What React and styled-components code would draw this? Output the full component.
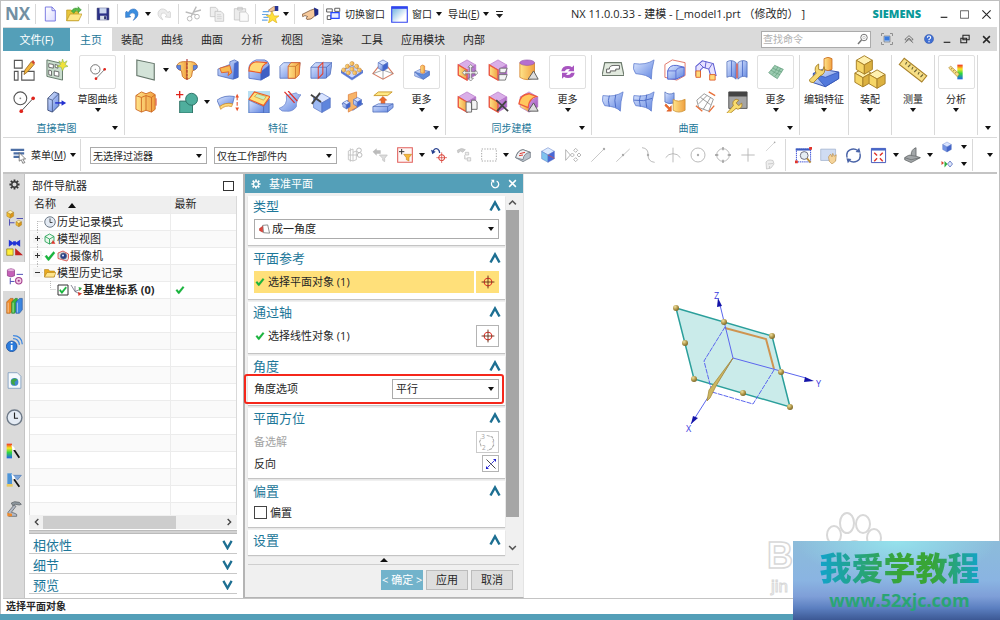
import React from 'react';
import styled, { createGlobalStyle } from 'styled-components';

const teal = '#549fb8';
const link = '#1d7799';
const ink = '#262626';
const rule = '#d9d9d9';

const GlobalStyle = createGlobalStyle`
  * {
    box-sizing: border-box;
  }
  body {
    margin: 0;
    background: #fff;
    color: ${ink};
    font-family: 'Open Sans', 'Noto Sans CJK SC', sans-serif;
    font-size: 10px;
    line-height: 16px;
  }
  button, input, select {
    font: inherit;
    color: inherit;
    margin: 0;
    padding: 0;
    border: 0;
    background: none;
    border-radius: 0;
  }
  svg {
    display: block;
    flex: none;
  }
`;

/* ---------- drawings ---------- */

const P = ({ d, f = 'none', s = '#444', w = 1, ...rest }) => (
  <path d={d} fill={f} stroke={s} strokeWidth={w} {...rest} />
);

const Cube = ({ x = 12, y = 12, r = 11, top = '#d9e4ff', left = 'url(#blue)', right = '#3f63cf', s = '#5570c0' }) => {
  const k = r * 0.87;
  const h = r / 2;
  return (
    <g stroke={s} strokeWidth="0.7" strokeLinejoin="round">
      <path fill={top} d={`M${x} ${y - r}l${k} ${h}l${-k} ${h}l${-k} ${-h}z`} />
      <path fill={left} d={`M${x - k} ${y - h}l${k} ${h}v${r}l${-k} ${-h}z`} />
      <path fill={right} d={`M${x + k} ${y - h}l${-k} ${h}v${r}l${k} ${-h}z`} />
    </g>
  );
};

const YellowCube = (props) => <Cube top="#fff1b0" left="#f6d666" right="#dcb140" s="#a9822a" {...props} />;

const SyncCube = () => (
  <g>
    <Cube top="#d9aee8" left="url(#gold)" right="url(#purple)" s="#b06cc4" />
    <P d="M2.5 6.5v11L12 23V12z" s="#ee5a3c" w={1.4} />
  </g>
);

const Ball = ({ x, y }) => <circle cx={x} cy={y} r="2.3" fill="url(#gold)" stroke="#b97c28" strokeWidth="0.5" />;

const Sheet = ({ lines }) => (
  <g>
    <P d="M1 5Q14 7 23 1Q20 12 20 22Q16 17 3 16Q-1 11 1 5z" f="url(#blue)" s="#5a78cc" w={0.8} />
    {lines}
  </g>
);

const Wrench = () => (
  <P
    d="M5 23L12 15Q10 10 15 8L18 9L15 12L18 15L21 12Q23 17 17 19L15 18L9 23Q6 25 5 23z"
    f="#f8dc70"
    s="#a5791c"
    w={0.8}
  />
);

const Tick = () => <P d="M2 13L5 10L9 15L19 3L22 6L10 21H8z" f="#17b73c" s="#119a30" w={0.6} />;

const art = {
  newFile: <P d="M5 1.5H15L20 7V22.500H5zM15 1.5V7H20" f="url(#paper)" s="#7474e0" w={1.4} />,
  open: (
    <g>
      <P d="M1 6H8L10 8H19V22H1z" f="#e8c63c" s="#b99318" />
      <P d="M1 22L6 12H24L19 22z" f="#ffe88b" s="#b99318" />
      <P d="M8 8Q12 1 18 4V1L23 6L18 10V7Q13 6 12 11z" f="#57b848" s="#2d8a28" w={0.7} />
    </g>
  ),
  save: (
    <g>
      <P d="M2 2H22V22H2z" f="#2b3187" s="#20265f" />
      <path d="M6 2H18V11H6z" fill="#cbd6ee" />
      <path d="M7 15H18V22H7z" fill="#d9dfea" />
      <path d="M14 16H17V21H14z" fill="#20265f" />
    </g>
  ),
  undo: (
    <P d="M1 9V18L10 17L7 14Q12 8 16 11Q20 15 14 23Q24 17 22 9Q18 0 9 5L5 10L3 7z" f="#3b8ee0" s="#2560b0" w={0.8} />
  ),
  redo: (
    <P d="M23 9V18L14 17L17 14Q12 8 8 11Q4 15 10 22Q0 17 2 9Q6 0 15 5L19 10L21 7z" f="#ececec" s="#c4c4c4" />
  ),
  cut: (
    <g>
      <P d="M17 1L9 16M1 9L16 13M13 9L24 6" s="#bbb" w={2} />
      <circle cx="7" cy="19" r="3.5" fill="none" stroke="#bbb" strokeWidth="1.5" />
      <circle cx="18" cy="16" r="3.5" fill="none" stroke="#bbb" strokeWidth="1.5" />
    </g>
  ),
  copy: (
    <g>
      <P d="M2 2H10L13 5V16H2z" f="#eee" s="#bbb" />
      <P d="M9 8H18L22 12V23H9z" f="#eee" s="#bbb" />
      <P d="M12 13H18M12 16H19M12 19H19" s="#ccc" />
    </g>
  ),
  paste: (
    <g>
      <P d="M2 4H19V21H2zM7 2H14V6H7z" f="#ececec" s="#bdbdbd" />
      <P d="M10 9H19L23 13V23H10z" f="#fafafa" s="#bbb" />
    </g>
  ),
  star: (
    <g>
      <P d="M1 8H10M0 12H9M2 16H9M0 20H8" s="#6aa8e8" w={1.6} />
      <P d="M14 7L17 14L24 14L19 18L21 24L15 20L9 24L11 17L6 13H12z" f="#ffe03c" s="#d8a810" w={0.8} />
      <P d="M9 6L16 1H20V6L12 8z" f="#f3c699" s="#8d6137" w={0.8} />
      <path d="M18 0H23V7H18z" fill="#283593" />
    </g>
  ),
  pointer: (
    <g>
      <P d="M0 12Q8 8 12 6L18 4V14Q13 20 7 19Q4 17 8 15Q4 12 1 15z" f="#f6c99b" s="#6b4528" />
      <path d="M17 2L23 5V12L18 15z" fill="#1e2a88" />
    </g>
  ),
  switchWin: (
    <g>
      <P d="M1 3H10V8H1z" f="#fff" s="#555" w={1.5} />
      <P d="M14 2H22V7H14z" f="#fff" s="#555" w={1.5} />
      <P d="M2 14H8V20H2z" f="#fff" s="#555" w={1.5} />
      <P d="M8 9H21V18H8z" f="#e6ecff" s="#2345ff" w={2} />
    </g>
  ),
  window: (
    <g>
      <P d="M1 1H23V23H1z" f="url(#pane)" s="#3346f0" w={1.6} />
      <path d="M1 1H23V4H1z" fill="#2f45ee" />
    </g>
  ),
  sketchEdit: (
    <g>
      <P d="M1.500 1.500H10V10H1.500zM1.500 13.500H5.500V23H1.500zM9.500 13.500H23V23H9.500z" f="#fff" s="#555" w={1.2} />
      <P d="M12 17L13 12L20 3L23 6L16 14z" f="#f3b53b" s="#8a5a19" w={0.8} />
      <path d="M20 3L23 6L24 4L22 1z" fill="#d0432c" />
    </g>
  ),
  sketchNew: (
    <g>
      <P d="M1 1L18 5V23L1 19z" f="#c9dccd" s="#5d7464" />
      <P d="M3 5L8 6V10L3 9zM3 12L6 13V18L3 17zM9 13L14 14V19L9 18zM10 6L13 7V10L10 9z" f="#fff" s="#444" w={0.8} />
      <path d="M18 0L19.500 4L23 2L21 6L24 8L20 9L18 13L16.500 9L12 8L16 6L14 2L17 4z" fill="#f2e23a" stroke="#7fb04c" strokeWidth="0.6" />
    </g>
  ),
  curve: (
    <g>
      <circle cx="8" cy="8" r="7" fill="#fff" stroke="#555" strokeWidth="1.2" />
      <circle cx="8" cy="8" r="1" fill="#888" />
      <P d="M9 22L22 8" s="#444" />
      <circle cx="9" cy="22" r="2" fill="#e0241c" />
      <circle cx="22" cy="8" r="2" fill="#e0241c" />
    </g>
  ),
  pad: (
    <g>
      <P d="M2 8L9 1L14 3V16L7 23L2 21z" f="url(#blue)" s="#3a4b78" />
      <P d="M2 8L7 10V23M7 10L14 3" s="#3a4b78" w={0.8} />
      <P d="M10 13H18" s="#2330d0" w={1.6} />
      <path d="M17 10L22 13L17 16z" fill="#2330d0" />
    </g>
  ),
  plane: <P d="M2 1L21 5V23L2 18z" f="#d3e3d8" s="#64756a" w={1.2} />,
  revolve: (
    <g>
      <P d="M12 3Q3 2 1 7Q0 11 6 13L7 19Q9 22 12 22z" f="url(#gold)" s="#c66a25" w={0.9} />
      <P d="M12 3Q21 2 23 7Q24 11 18 13L17 19Q15 22 12 22z" f="url(#gold)" s="#c66a25" w={0.9} />
      <P d="M1 7Q0 11 5 12V7zM23 7Q24 11 19 12V7z" f="#5f86e0" s="#3f60c0" w={0.7} />
      <P d="M12 0V24" s="#a33" w={1.2} strokeDasharray="3 1" />
    </g>
  ),
  extrude: (
    <g>
      <P d="M1 5L7 1L12 3L17 1L22 4V20L18 23L12 21L7 23L1 20z" f="url(#gold)" s="#cf6a24" />
      <P d="M1 5L7 7L12 5L18 7L22 4M7 7V23M12 5V21M18 7V23" s="#cf6a24" />
      <P d="M23 8V16" s="#e0402c" />
    </g>
  ),
  unite: (
    <g>
      <P d="M4 11H18V24H4z" f="#4fae9d" s="#2a6f63" />
      <circle cx="17" cy="9" r="6.500" fill="#4fae9d" stroke="#2a6f63" />
      <P d="M4 0V8M0 4H8" s="#e0241c" w={1.500} />
    </g>
  ),
  hole: (
    <g>
      <P d="M1 11L14 6V3L19 1L23 3V20L17 22L1 18z" f="url(#blue)" s="#4a68b8" w={0.8} />
      <P d="M3 10L14 7L16 15L12 18L13 14L5 15z" f="#f8ba50" s="#e0602a" />
      <P d="M19 5L23 3V20L18 22z" f="#4468d0" s="#4a68b8" w={0.6} />
    </g>
  ),
  edgeBlend: (
    <g>
      <P d="M1 10V21L14 23L23 18V6Q22 2 18 1H9Q1 4 1 10z" f="url(#blue)" s="#3f60c0" w={0.8} />
      <P d="M14 14L23 7V18L14 23z" f="#3f5fc4" s="#3f60c0" w={0.6} />
      <P d="M1 13Q1 4 9 3L21 4Q15 6 14 15z" f="#ffd978" s="#ec5a28" w={1.2} />
    </g>
  ),
  shell: (
    <g>
      <P d="M1 8L5 4H23L21 18L17 21H1z" f="url(#blue)" s="#4a68b8" w={0.8} />
      <P d="M10 8L13 4H23L22 17L18 21H10z" f="url(#gold)" s="#e0602a" />
      <P d="M10 8H18L23 4M18 8V21" s="#c66a25" w={0.8} />
    </g>
  ),
  draft: (
    <g>
      <P d="M1 9L6 4H24L22 17L17 21H1z" f="url(#blue)" s="#4a68b8" w={0.8} />
      <P d="M1 9H18L24 4M18 9V21" s="#4a68b8" w={0.8} />
      <P d="M9 21V9L14 4V16z" s="#e6402c" w={1.1} />
    </g>
  ),
  pattern: (
    <g>
      <P d="M0 13L12 7L24 13L12 21z" f="#cdd9ff" s="#5a78cc" />
      <P d="M0 13V15L12 23L24 15V13L12 21z" f="#5576d8" s="#5a78cc" w={0.5} />
      <Ball x={12} y={5} /><Ball x={7} y={8} /><Ball x={17} y={8} /><Ball x={12} y={11} />
      <Ball x={3} y={12} /><Ball x={20} y={12} /><Ball x={8} y={15} /><Ball x={15} y={15} />
    </g>
  ),
  taper: (
    <g>
      <P d="M12 2L1 16L12 22L23 16z" s="#d77c62" w={1.2} />
      <P d="M1 16L12 12L23 16M12 12V22" s="#888" w={0.8} />
      <Cube x={12} y={7} r={6} />
    </g>
  ),
  offset: (
    <g>
      <P d="M0 10Q8 4 19 6L17 14Q9 12 3 17z" f="url(#blue)" s="#4a68b8" w={0.8} />
      <P d="M3 17Q9 12 17 14L16 17Q9 15 4 20z" f="#ffd978" s="#cf8a24" w={0.8} />
      <P d="M22 6V18" s="#e8542c" w={1.2} strokeDasharray="4 2" />
      <path d="M20 7L22 3L24 7zM20 18L22 22L24 18z" fill="#e8542c" />
    </g>
  ),
  chamfer: (
    <g>
      <path d="M0 0H24V24H0z" fill="#b9dff2" />
      <P d="M1 10L17 17V24H1z" f="url(#blue)" s="#4a68b8" w={0.8} />
      <P d="M17 17L23 9V24H17z" f="#6c8fe0" s="#4a68b8" w={0.8} />
      <P d="M1 9L7 1L24 6L17 16z" f="#ffe27a" s="#ec5a28" w={1.3} />
      <P d="M7 6L10 3L20 6L17 10z" f="#c9efc0" s="#d08a28" w={0.7} />
    </g>
  ),
  thread: (
    <g>
      <P d="M8 5L19 2Q20 5 24 4Q18 11 19 17Q15 23 8 22Q3 23 0 19Q10 16 8 5z" f="url(#blue)" s="#6a84cc" w={0.8} />
      <P d="M6 1L17 13M10 0L20 11" s="#dd2f2a" w={1.4} />
    </g>
  ),
  trim: (
    <g>
      <Cube x={13} y={13} r={10.500} left="#9dbaf4" right="#5e85dc" />
      <P d="M1 4L12 12M11 2L2 14" s="#444" w={2} />
    </g>
  ),
  split: (
    <g>
      <P d="M1 14L8 10L24 14L13 21z" f="url(#blue)" s="#4a68b8" w={0.8} />
      <P d="M8 4L17 1V18L8 23z" f="#f8b468" s="#dd7a34" w={0.8} />
      <Cube x={18} y={12} r={5} />
      <Cube x={6} y={15} r={4.5} />
    </g>
  ),
  thicken: (
    <g>
      <P d="M2 5L7 1H22L17 5z" f="#ffe884" s="#c9982a" />
      <P d="M10 14V10H8L12 6L16 10H14V14z" f="#ee6a2a" s="#c94d17" w={0.7} />
      <P d="M1 17L7 14H23V18L17 23H1z" f="url(#blue)" s="#4a68b8" w={0.8} />
      <P d="M1 17H17L23 14M17 17V23" s="#4a68b8" w={0.8} />
    </g>
  ),
  boss: (
    <g>
      <P d="M1 12L9 8L23 11V17L14 23L1 18z" f="url(#blue)" s="#4a68b8" w={0.8} />
      <P d="M1 12L14 16L23 11V17L14 23z" f="#5f8bdc" s="#4a68b8" w={0.8} />
      <P d="M10 3Q13 0 16 3V13Q13 15 10 13z" f="url(#gold)" s="#dd7a34" />
    </g>
  ),
  moveFace: (
    <g>
      <SyncCube />
      <P d="M16 6L19 9H17V14H21V12L24 15L21 18V16H17V21H19L16 24L13 21H15V16H10V18L7 15L10 12V14H15V9H13z" f="#f4f4f4" s="#666" w={0.7} />
    </g>
  ),
  pullFace: (
    <g>
      <SyncCube />
      <P d="M14 10H22L20 15H14zM13 17H22L20 23H13z" f="#f4f4f4" s="#666" w={0.9} />
    </g>
  ),
  offsetRegion: (
    <g>
      <P d="M2 4V20Q10 25 18 20V4z" f="url(#gold)" s="#d07820" w={0.8} />
      <ellipse cx="10" cy="4" rx="8" ry="3" fill="#b56fd0" stroke="#8a4aa6" strokeWidth="0.6" />
      <P d="M17 13L22 22H11z" f="#dedede" s="#555" />
    </g>
  ),
  replaceFace: (
    <g>
      <SyncCube />
      <P d="M11 12H15L17 14V23H11zM17 10H21L23 12V20H17z" f="#f4f4f4" s="#666" />
    </g>
  ),
  deleteFace: (
    <g>
      <SyncCube />
      <P d="M10 10L23 22M21 11L11 22" s="#444" w={2} />
    </g>
  ),
  resizeBlend: (
    <g>
      <Cube top="#d9aee8" left="url(#gold)" right="url(#purple)" s="#b06cc4" />
      <P d="M1 14Q2 4 12 3L20 6Q12 8 11 18z" f="#ffc85e" s="#ee5a3c" w={1.4} />
      <P d="M17 13L22 22H11z" f="#dedede" s="#555" />
    </g>
  ),
  sync: (
    <g fill="#a855c0">
      <path d="M2 11Q3 3 12 3Q16 3 18 5L21 2V11H12L15 8Q10 6 7 11z" />
      <path d="M22 13Q21 21 12 21Q8 21 6 19L3 22V13H12L9 16Q14 18 17 13z" />
    </g>
  ),
  fourPoint: (
    <g>
      <P d="M3 4H21L24 18H0z" f="#e2eadf" s="#6c7a6c" w={1.3} />
      <P d="M5 15V11H8Q8 7 13 7H19V11H15V13H9V15z" f="#fff" s="#555" />
    </g>
  ),
  sheet: <Sheet />,
  mesh1: <Sheet lines={<P d="M8 5Q6 10 8 17M15 4Q13 10 15 18" s="#3f60c0" w={0.9} />} />,
  mesh2: <Sheet lines={<P d="M8 5Q6 10 8 17M15 4Q13 10 15 18M1 10Q12 12 21 8" s="#3f60c0" w={0.9} />} />,
  studio: (
    <g>
      <P d="M1 6L9 1L23 4V18L14 23L1 20z" s="#e07060" />
      <P d="M4 13Q6 6 14 7L22 9V18L13 22H4z" f="url(#blue)" s="#4a5fd0" />
      <P d="M4 13H13Q14 9 22 9M13 13V22" s="#4a5fd0" w={0.8} />
    </g>
  ),
  sweep: (
    <g>
      <P d="M1 8L8 2L20 5L23 18H17L15 11L9 9L6 12V18H1z" f="#e6e2ff" s="#5a5ad0" w={1.1} />
      <P d="M5 5L9 9M12 3L11 10M19 5L15 11" s="#5a5ad0" />
      <P d="M1 13H6V20H1zM16 17H22V23H16z" f="#ffd978" s="#e0602a" />
    </g>
  ),
  through: (
    <g>
      <P d="M1 3Q6 0 11 4V22Q6 17 1 20z" f="url(#blue)" s="#4a68b8" w={0.8} />
      <P d="M13 4Q18 0 23 3V20Q18 17 13 22z" f="url(#blue)" s="#4a68b8" w={0.8} />
      <P d="M6 2V19M18 2V19" s="#3f60c0" w={0.8} />
      <P d="M12 5V21" s="#e0402c" w={1.3} />
    </g>
  ),
  extract: (
    <g>
      <P d="M1 1Q5 5 11 2V13Q5 15 1 12z" f="url(#blue)" s="#4a68b8" w={0.8} />
      <P d="M10 9Q15 13 23 9V21Q16 25 10 21z" f="url(#gold)" s="#c98d2c" w={0.8} />
      <P d="M2 14L6 18L8 16V22H3L5 20L1 16z" f="#ee6a2a" s="#c94d17" w={0.5} />
    </g>
  ),
  xform: (
    <g>
      <P d="M2 10L10 3L20 9L15 22L4 18zM6 7L17 15M4 14L13 5M9 20L17 7" f="#fff" s="#777" w={0.8} />
      <P d="M1 16L8 22M15 1L22 5M15 23L21 16" s="#e8703a" w={1.5} />
    </g>
  ),
  toolWin: (
    <g>
      <P d="M3 1H23V19H3z" f="#a5a5a5" s="#555" />
      <path d="M3 1H23V6H3z" fill="#444" />
      <g transform="translate(-4 1)"><Wrench /></g>
    </g>
  ),
  greenMesh: (
    <g>
      <P d="M1 13Q6 8 10 2Q16 5 23 8Q19 14 14 22Q7 18 1 13z" f="#9bcbb0" s="#5e9a78" />
      <P d="M6 16Q12 11 15 4M10 19Q16 13 19 6M4 9Q11 14 18 16M7 6Q14 10 21 12" s="#5e9a78" w={0.9} />
    </g>
  ),
  editFeature: (
    <g>
      <P d="M4 13L11 10L23 12V17L13 23L4 20z" f="url(#blue)" s="#2f4fae" w={0.7} />
      <P d="M4 13L13 16L23 12V17L13 23z" f="#5279dc" s="#2f4fae" w={0.5} />
      <P d="M12 2Q15 0 18 2V10Q15 12 12 10z" f="url(#gold)" s="#c96c20" w={0.6} />
      <P d="M1 18L6 13Q4 8 8 6V10L11 11L12 8Q14 13 9 15L4 20Q1 20 1 18z" f="#f5d873" s="#9a7418" w={0.6} />
    </g>
  ),
  assembly: (
    <g>
      <YellowCube x={7} y={16} r={6.5} />
      <YellowCube x={17} y={17} r={6.5} />
      <YellowCube x={8} y={7} r={6.5} />
    </g>
  ),
  ruler: (
    <g>
      <P d="M1 6L5 1L23 15L19 20z" f="#f7df86" s="#a9822a" w={0.9} />
      <P d="M7 4L6 6M10 6L8 8M12 8L11 10M15 10L13 12M17 12L16 14M20 14L18 16" s="#6f6636" w={0.9} />
    </g>
  ),
  analyse: (
    <g>
      <path d="M14 1H22V23H14z" fill="url(#rainbow)" />
      <P d="M1 6L4 3L17 15L14 19z" f="#f7df86" s="#a9822a" w={0.9} />
      <P d="M6 6L5 8M9 9L8 11M12 12L11 14" s="#6f5616" />
    </g>
  ),
  menu: (
    <g>
      <P d="M1 4H20M5 9H20M5 14H14" s="#4d6fa5" w={3} />
      <P d="M13 8L22 17L18 17L21 22L18 23L16 18L13 20z" f="#fff" s="#555" />
    </g>
  ),
  grayChain: (
    <g>
      <P d="M2 6L9 3V21L2 19zM2 12H15M9 8L14 6V19L9 21M5 2V22" s="#bdbdbd" w={1.2} />
      <circle cx="18" cy="5" r="3.5" fill="none" stroke="#bdbdbd" strokeWidth="1.5" />
      <circle cx="19" cy="12" r="3.5" fill="none" stroke="#bdbdbd" strokeWidth="1.5" />
    </g>
  ),
  grayBack: (
    <g>
      <path d="M1 7L7 2V5H13V10H7V13z" fill="#bbb" />
      <P d="M11 12H23L19 17V22L16 20V17z" f="#ddd" s="#bbb" />
    </g>
  ),
  funnelBox: (
    <g>
      <P d="M1 1H23V23H1z" f="#fff6f4" s="#e2605c" w={1.6} />
      <P d="M7 3V11M3 7H11" s="#333" w={1.5} />
      <P d="M10 11H22L18 16V21L14 19V16z" f="#f6b73a" s="#bd7b14" w={0.8} />
    </g>
  ),
  redTarget: (
    <g>
      <P d="M3 7Q5 1 10 3Q13 5 13 9" s="#27408e" w={2} />
      <path d="M0 4L7 7L2 11z" fill="#27408e" />
      <circle cx="16" cy="16" r="4.500" fill="none" stroke="#d8362c" strokeWidth="1.5" />
      <P d="M16 8V24M8 16H24" s="#d8362c" />
    </g>
  ),
  grayTree: (
    <g>
      <P d="M2 5Q8 0 14 4L10 8L7 6L3 9z" f="#ccc" s="#bbb" />
      <P d="M14 8H19V12H14zM17 16H22V21H17zM13 12V18H17" f="#eee" s="#bbb" />
    </g>
  ),
  marquee: <P d="M1 3H23V21H1z" s="#999" w={1.3} strokeDasharray="2 2" />,
  shade: (
    <g>
      <P d="M1 16Q3 5 12 4L23 8V16L12 22z" f="#b9c2cc" s="#5d6670" />
      <P d="M1 16Q4 5 12 4L23 8Q13 9 12 19z" f="#eef1f4" s="#5d6670" />
      <P d="M7 10L15 8M6 13L12 12" s="#dd3a30" w={1.5} />
    </g>
  ),
  blueCube: (
    <g>
      <Cube left="#7fc4ee" right="#4866d8" top="#dcebff" />
      <P d="M12 12L22 17" s="#e0503c" />
    </g>
  ),
  arrows: (
    <g stroke="#aaa" fill="none" strokeWidth="1.3">
      <path d="M1 4V20L8 12zM16 2L19 5L16 8L13 5zM16 16L19 19L16 22L13 19zM11 9L14 12L11 15L8 12zM21 9L24 12L21 15L18 12z" />
    </g>
  ),
  line: (
    <g>
      <P d="M2 22L20 4" s="#aaa" />
      <circle cx="21" cy="3" r="1.800" fill="#aaa" />
    </g>
  ),
  midLine: (
    <g>
      <P d="M2 22L22 3" s="#aaa" />
      <circle cx="12" cy="12" r="1.800" fill="#aaa" />
    </g>
  ),
  spline: (
    <g>
      <P d="M3 1Q13 2 12 12Q12 22 22 23" s="#aaa" w={1.2} />
      <circle cx="12" cy="12" r="1.800" fill="#aaa" />
    </g>
  ),
  arcCross: <P d="M12 1V23M1 16Q5 10 12 10Q19 10 23 16" s="#b0b0b0" w={1.3} />,
  circleDot: (
    <g>
      <circle cx="12" cy="12" r="10.500" fill="none" stroke="#b0b0b0" strokeWidth="1.3" />
      <circle cx="12" cy="12" r="1.800" fill="#aaa" />
    </g>
  ),
  circleQuad: (
    <g>
      <circle cx="12" cy="12" r="9.500" fill="none" stroke="#b0b0b0" strokeWidth="1.3" />
      <P d="M12 0V5M12 19V24M0 12H5M19 12H24" s="#999" w={2} />
    </g>
  ),
  plus: <P d="M12 2V22M2 12H22" s="#b0b0b0" w={1.3} />,
  grayFace: <P d="M4 8Q8 2 18 5L20 12L14 20L5 22zM8 12L18 11M11 16V21" f="#eee" s="#bbb" w={1.3} />,
  zoomWin: (
    <g>
      <P d="M2 3H22V21H2z" s="#3c50d8" w={1.4} strokeDasharray="2 1" />
      <path d="M1 2H22V5H1z" fill="#3b5bc0" />
      <circle cx="13" cy="12" r="5.500" fill="#e6eef4" stroke="#667" strokeWidth="1.3" />
      <P d="M17 16L22 22" s="#bb8f3a" w={2.5} />
      <path d="M0 19H4V23H0zM20 0H24V4H20z" fill="#e0342c" />
    </g>
  ),
  pan: (
    <g>
      <P d="M1 3H22V19H1z" f="#cfdcf2" s="#9fb0cc" />
      <P d="M12 14L15 10L17 14L18 9L20 13L23 11L22 20L17 24L13 20z" f="#f5d49a" s="#b5853c" w={0.8} />
    </g>
  ),
  rotate: (
    <g>
      <P d="M3 15Q1 7 7 4Q13 1 18 5M21 9Q23 17 17 20Q11 23 6 19" s="#4a64a8" w={2} />
      <path d="M15 7L22 8L20 1zM9 17L2 16L4 23z" fill="#4a64a8" />
    </g>
  ),
  fit: (
    <g>
      <P d="M2 2H22V22H2z" f="#fff" s="#3c50b8" w={1.3} />
      <path d="M2 2H22V5H2z" fill="#4667c8" />
      <P d="M6 8L10 12M18 8L14 12M6 20L10 16M18 20L14 16" s="#e0342c" w={2} />
    </g>
  ),
  section: (
    <g>
      <P d="M1 15Q8 10 10 12Q10 3 17 1V13L23 15L10 22L1 18z" f="#a2a6a8" s="#55595b" />
      <P d="M1 15L10 18L23 15M10 12L17 13" s="#55595b" w={0.8} />
    </g>
  ),
  smallCube: <Cube r={10} left="#7393e4" right="#4465c8" />,
  playPair: (
    <g>
      <path d="M1 6L6 10L1 14z" fill="#d8402c" />
      <path d="M7 6L13 12L7 19z" fill="#2faa3c" />
      <P d="M13 12L18 6L23 12L18 18z" f="#dfe6fa" s="#4a64b8" w={1.5} />
    </g>
  ),
  gear: (
    <g>
      <circle cx="12" cy="12" r="6" fill="none" stroke="currentColor" strokeWidth="3" />
      <g stroke="currentColor" strokeWidth="4">
        <path d="M12 1V5M12 19V23M1 12H5M19 12H23M4 4L7 7M17 17L20 20M20 4L17 7M4 20L7 17" />
      </g>
    </g>
  ),
  partsTree: (
    <g>
      <YellowCube x={6} y={6} r={5.5} left="#f4bd2e" right="#dd9514" />
      <YellowCube x={18} y={19} r={4.5} left="#f4bd2e" right="#dd9514" />
      <P d="M5 13V22M5 18H12M15 12H24" s="#4545b0" w={1.3} />
    </g>
  ),
  constraint: (
    <g>
      <path d="M4 1L10 5V3H14V5L20 1V11L14 7V9H10V7L4 11z" fill="#2133d6" />
      <P d="M1 14H10V23H1z" f="#ffee3a" s="#8b7a10" />
      <path d="M13 13L24 23H13z" fill="#c22222" />
    </g>
  ),
  history: (
    <g>
      <P d="M2 3Q7 0 12 3V11Q7 14 2 11z" f="#c55fb8" s="#8c3684" />
      <ellipse cx="7" cy="3" rx="5" ry="2" fill="#e9b2e2" stroke="#8c3684" strokeWidth="0.6" />
      <P d="M6 14V23M6 19H12M15 9H24" s="#4545b0" w={1.3} />
      <circle cx="18" cy="18" r="4.500" fill="#f3cbe6" stroke="#a33d8c" strokeWidth="1.5" />
      <circle cx="18" cy="18" r="1.500" fill="#a33d8c" />
    </g>
  ),
  books: (
    <g strokeWidth="0.8">
      <path d="M1 7L6 2H10V18L6 23H1z" fill="#f08a26" stroke="#a8530c" />
      <path d="M8 7L13 2H16V18L12 23H8z" fill="#38b53c" stroke="#1b741f" />
      <path d="M14 7L19 2H23V18L19 23H14z" fill="#3c86e0" stroke="#1a4c98" />
      <path d="M3 8V22M10 8V22M16 8V22" stroke="#fff" />
    </g>
  ),
  info: (
    <g>
      <circle cx="8" cy="16" r="7.500" fill="#2b7bdc" stroke="#164a98" />
      <P d="M8 14V21M8 10V12" s="#fff" w={2.5} />
      <P d="M10 5Q18 5 19 14M10 1Q22 1 23 13" s="#3c86e0" w={1.8} />
    </g>
  ),
  globe: (
    <g>
      <P d="M3 1H16L21 6V23H3z" f="#f4f8fc" s="#6c8fb8" />
      <circle cx="12" cy="14" r="5.500" fill="#4087cf" />
      <path d="M7 12Q12 7 16 11L12 14L13 19L8 17z" fill="#3fa545" />
    </g>
  ),
  clock: (
    <g>
      <circle cx="12" cy="12" r="10.500" fill="#e4ebf4" stroke="#6e7a88" strokeWidth="2" />
      <P d="M12 5V13H17" s="#222" w={1.6} />
    </g>
  ),
  rainbowPen: (
    <g>
      <path d="M1 1H9V23H1z" fill="url(#rainbow)" />
      <P d="M12 10L20 22" s="#111" w={2.6} />
      <path d="M8 3L12 6L14 10L10 11z" fill="#fff" />
    </g>
  ),
  bluePen: (
    <g>
      <path d="M2 2H9V18H2z" fill="#4c94d8" />
      <P d="M9 5H23L17 12" f="#7fa6d8" s="#4a78b8" />
      <P d="M12 11L20 22" s="#111" w={2.6} />
      <path d="M8 3L12 6L14 10L10 11z" fill="#fff" />
      <path d="M1 18H10V22H1z" fill="#e8c860" />
    </g>
  ),
  hammer: (
    <g>
      <P d="M8 3L13 1L20 2L23 5L20 6L14 5L10 7z" f="#8e979e" s="#51575c" />
      <P d="M12 6L15 8L8 17L12 18L16 20V23H4L3 17z" f="#b4bac6" s="#51575c" />
      <path d="M2 18L9 19V23H2z" fill="#ef8a2c" />
    </g>
  ),
  camera: (
    <g>
      <P d="M2 6L12 2L23 8V17L20 22L9 19L2 17z" f="#d8dce4" s="#d8362c" w={1.5} />
      <circle cx="13" cy="12" r="6" fill="#27408e" stroke="#5b6370" strokeWidth="1.5" />
      <circle cx="12" cy="11" r="2" fill="#e8eefc" />
    </g>
  ),
  views: (
    <g>
      <P d="M2 7L11 2L20 7V17L11 22L2 17zM2 7L11 12L20 7M11 12V22" f="#e7f7ea" s="#1f9e50" w={1.7} />
      <P d="M18 15L22 21L15 21z" f="#e0342c" s="#e0342c" />
    </g>
  ),
  folder: (
    <g>
      <P d="M1 5H9L11 8H21V20H1z" f="#e9a91d" s="#a97408" />
      <P d="M1 20L6 11H24L20 20z" f="#ffe48a" s="#a97408" />
    </g>
  ),
  tick: <Tick />,
  boxTick: (
    <g>
      <P d="M2 2H22V22H2z" f="#fff" s="#333" w={2} />
      <g transform="translate(3 3) scale(.75)"><Tick /></g>
    </g>
  ),
  csys: (
    <g>
      <P d="M2 2L10 15L20 20M10 15V4M10 15L22 10" s="#667" w={1.5} />
      <path d="M16 16L24 19L17 24z" fill="#d8362c" />
      <path d="M17 6L24 8L19 14z" fill="#2faa3c" />
    </g>
  ),
  angle: (
    <g>
      <P d="M8 3L19 2L23 20L10 19z" f="#fff" s="#444" w={1.3} />
      <P d="M1 10L8 5V18L1 14z" f="#e0463c" s="#a8201a" />
    </g>
  ),
  target: (
    <g>
      <circle cx="12" cy="12" r="6.500" fill="none" stroke="#e0342c" strokeWidth="2" />
      <P d="M12 1V23M1 12H23" s="#663018" w={1.6} />
    </g>
  ),
  reverse: (
    <g>
      <P d="M3 3L21 21" s="#333" w={1.8} />
      <P d="M5 19L19 5" s="#2222d0" w={1.8} strokeDasharray="8 3" />
      <path d="M16 2H22V8zM2 16V22H8z" fill="#2222d0" />
    </g>
  ),
  alternate: (
    <g>
      <P d="M11 3L18 5L20 10M20 15L17 20L12 22M4 17L2 11L4 7" s="#888" w={1.3} strokeDasharray="4 1" />
      <g fontSize="8" fill="#777">
        <text x="4" y="8">3</text>
        <text x="17" y="16">1</text>
        <text x="5" y="22">2</text>
      </g>
    </g>
  ),
  search: (
    <g>
      <circle cx="14" cy="9" r="6.500" fill="none" stroke="#777" strokeWidth="2" />
      <circle cx="14" cy="9" r="2.500" fill="none" stroke="#999" />
      <P d="M9 14L2 22" s="#777" w={3} />
    </g>
  ),
  fullscreen: (
    <g>
      <P d="M1 6V1H6M18 1H23V6M23 18V23H18M6 23H1V18" s="#888" w={1.8} />
      <P d="M6 6H18V18H6z" f="#b9d2f2" s="#555" />
      <path d="M7 7H17V15H7z" fill="#3a7ade" />
    </g>
  ),
  doubleUp: <P d="M2 13L12 4L22 13L18 15L12 10L6 15zM2 21L12 13L22 21" s="#555" w={1.8} />,
  help: (
    <g>
      <circle cx="12" cy="12" r="11" fill="#3f6fd4" stroke="#28499c" />
      <P d="M8 9Q8 5 12 5Q16 5 16 9Q16 11 12 13V15M12 17V20" s="#fff" w={2.5} />
    </g>
  ),
  minimise: <P d="M4 20H20" s="#333" w={3} />,
  maximise: <P d="M1 2H23V22H1z" s="#333" w={2} />,
  restore: <P d="M7 3H22V14H7zM2 10H16V21H2z" f="#dcdcdc" s="#222" w={2.5} />,
  close: <P d="M3 3L21 21M21 3L3 21" s="currentColor" w={2.4} />,
  closeBold: <P d="M3 3L21 21M21 3L3 21" s="currentColor" w={4} />,
  reset: (
    <g>
      <P d="M6 5Q2 10 4 15Q7 21 13 21Q20 20 21 13Q21 7 16 5" s="#fff" w={3} />
      <path d="M2 2H10V10z" fill="#fff" />
    </g>
  ),
  chevUp: <P d="M3 21L12 5L21 21" s="#1d6f92" w={5} />,
  chevDown: <P d="M3 4L12 20L21 4" s="#1d6f92" w={5} />,
  thinUp: <P d="M3 17L12 8L21 17" s="#555" w={4} />,
  thinDown: <P d="M3 8L12 17L21 8" s="#555" w={4} />,
  thinLeft: <P d="M16 3L7 12L16 21" s="#444" w={4} />,
  thinRight: <P d="M8 3L17 12L8 21" s="#444" w={4} />,
};

const Glyph = ({ name, size = 22 }) => (
  <svg width={size} height={size} viewBox="0 0 24 24" aria-hidden="true">
    {art[name]}
  </svg>
);

const Caret = () => (
  <svg width="6" height="4" viewBox="0 0 6 4" aria-hidden="true">
    <path d="M0 0H6L3 4z" fill="#111" />
  </svg>
);

const Gradients = () => (
  <svg width="0" height="0" aria-hidden="true">
    <defs>
      <linearGradient id="blue" x1="0" y1="0" x2="1" y2="1">
        <stop offset="0" stopColor="#dfe9ff" />
        <stop offset="1" stopColor="#5f84e0" />
      </linearGradient>
      <linearGradient id="gold" x1="0" y1="0" x2="1" y2="0">
        <stop offset="0" stopColor="#ffe489" />
        <stop offset="1" stopColor="#f0a040" />
      </linearGradient>
      <linearGradient id="purple" x1="0" y1="0" x2="1" y2="1">
        <stop offset="0" stopColor="#d49be6" />
        <stop offset="1" stopColor="#9a52b8" />
      </linearGradient>
      <linearGradient id="paper" x1="0" y1="0" x2="1" y2="1">
        <stop offset="0" stopColor="#fff" />
        <stop offset="1" stopColor="#dcdcff" />
      </linearGradient>
      <linearGradient id="pane" x1="0" y1="0" x2="1" y2="1">
        <stop offset="0.2" stopColor="#8ec2e6" />
        <stop offset="0.7" stopColor="#fff" />
      </linearGradient>
      <linearGradient id="rainbow" x1="0" y1="0" x2="0" y2="1">
        <stop offset="0" stopColor="#f03020" />
        <stop offset="0.3" stopColor="#f8e820" />
        <stop offset="0.6" stopColor="#30d840" />
        <stop offset="1" stopColor="#2060f0" />
      </linearGradient>
    </defs>
  </svg>
);

/* ---------- window frame ---------- */

const Frame = styled.div`
  display: flex;
  flex-direction: column;
  min-height: 100vh;
`;
const Window = styled.div`
  flex: 1;
  display: flex;
  flex-direction: column;
  padding: 0 2px;
  border: solid #bfbfbf;
  border-width: 1px 1px 0;
`;
const TitleBar = styled.header`
  display: flex;
  align-items: center;
  height: 26px;
`;
const Logo = styled.strong`
  width: 30px;
  padding-left: 2px;
  font-size: 17px;
  color: #7390a3;
`;
const IconButton = styled.button`
  display: flex;
  align-items: center;
  justify-content: center;
  flex: none;
  width: ${(p) => p.$w || 24}px;
  height: ${(p) => p.$h || 24}px;
`;
const Divider = styled.i`
  flex: none;
  width: 1px;
  height: ${(p) => p.$h || 20}px;
  margin: 0 ${(p) => p.$gap || 2}px;
  background: ${rule};
`;
const TextButton = styled.button`
  display: flex;
  align-items: center;
  gap: 4px;
  padding-right: 6px;
  white-space: nowrap;
`;
const WindowTitle = styled.h1`
  flex: 1;
  margin: 0;
  text-align: center;
  font-size: 11px;
  font-weight: 400;
  white-space: pre;
`;
const Brand = styled.strong`
  margin-right: 12px;
  font-size: 11px;
  font-weight: 800;
  color: #0a9999;
`;

/* ---------- tabs ---------- */

const TabBar = styled.nav`
  display: flex;
  align-items: center;
  height: 24px;
  background: #dadada;
  font-size: 11px;
`;
const Tab = styled.button`
  align-self: stretch;
  padding: 0 ${(p) => (p.$active ? 10 : 9)}px;
  border-top: 1px solid ${rule};
  background: ${(p) => (p.$active ? '#fff' : 'none')};
  color: ${(p) => (p.$active ? link : ink)};
`;
const FileTab = styled(Tab)`
  width: 67px;
  background: ${teal};
  color: #fff;
`;
const SearchBox = styled.label`
  display: flex;
  align-items: center;
  width: 110px;
  height: 17px;
  margin: 0 5px 0 auto;
  padding: 0 1px;
  border: 1px solid #ababab;
  background: #fff;
  font-size: 10px;
`;
const SearchInput = styled.input`
  flex: 1;
  min-width: 0;
  outline: none;
  &::placeholder {
    color: #b0b0b0;
  }
`;

/* ---------- ribbon ---------- */

const Ribbon = styled.section`
  display: grid;
  grid-template-columns: 122fr 321fr 146fr 208fr 49fr 43fr 43fr 43fr 19fr;
  height: 87px;
  border-bottom: 1px solid ${rule};
`;
const Group = styled.div`
  display: flex;
  flex-direction: column;
  min-width: 0;
  margin: 4px 0 2px;
  border-right: 1px solid ${rule};
`;
const GroupBody = styled.div`
  flex: 1;
  display: flex;
  padding: 0 ${(p) => p.$tail || 5}px 0 10px;
`;
const IconGrid = styled.div`
  flex: 1;
  display: grid;
  grid-template-columns: ${(p) => p.$cols};
  grid-template-rows: 22px 22px;
  gap: 10px 0;
  padding-top: 4px;
`;
const Tool = styled.button`
  display: flex;
  align-items: center;
  gap: 6px;
`;
const BigTool = styled.button`
  display: flex;
  flex-direction: column;
  align-items: center;
  width: ${(p) => (p.$wide ? '100%' : '37px')};
  white-space: nowrap;
  line-height: 14px;
`;
const BigFrame = styled.span`
  display: flex;
  align-items: center;
  justify-content: center;
  width: 37px;
  height: 34px;
  margin-bottom: 3px;
  border: 1px solid ${(p) => (p.$plain ? 'transparent' : '#e0e0e0')};
  border-radius: 2px;
`;
const BigLabel = styled.span`
  margin-bottom: 2px;
`;
const GroupFoot = styled.div`
  display: flex;
  align-items: center;
  height: 15px;
  padding-left: 4px;
  color: ${link};
`;
const GroupName = styled.span`
  flex: 1;
  text-align: center;
`;
const LastCell = styled(Group)`
  border: 0;
  justify-content: flex-end;
`;

/* ---------- selection bar ---------- */

const SelectionBar = styled.section`
  display: flex;
  align-items: center;
  height: 36px;
  border-bottom: 2px solid #c4c4c4;
`;
const MenuButton = styled.button`
  display: flex;
  align-items: center;
  gap: 4px;
  width: 73px;
  padding-left: 7px;
  white-space: nowrap;
`;
const FilterGroup = styled.div`
  display: flex;
  gap: 7px;
  padding: 0 5px;
`;
const Combo = styled.span`
  display: grid;
  grid-template-columns: auto 1fr auto;
  align-items: center;
  width: ${(p) => p.$w || '100%'};
  height: ${(p) => p.$h || 17}px;
  padding: 0 4px 0 0;
  border: 1px solid #ababab;
  background: #fff;
  & > svg {
    grid-row: 1;
    pointer-events: none;
  }
  & > svg:first-child {
    grid-column: 1;
    margin-left: 4px;
  }
  & > svg:last-child {
    grid-column: 3;
  }
`;
const Select = styled.select`
  grid-area: 1 / 1 / 2 / 4;
  width: 100%;
  height: 100%;
  padding-left: ${(p) => p.$pad || 2}px;
  appearance: none;
  outline: none;
`;
const Stack = styled.div`
  display: flex;
  flex-direction: column;
  justify-content: center;
`;
const Spring = styled.i`
  flex: 1;
`;

/* ---------- workspace ---------- */

const Workspace = styled.main`
  flex: 1;
  display: flex;
`;
const ResourceBar = styled.aside`
  display: flex;
  flex-direction: column;
  gap: 5px;
  width: 22px;
  background: #dadada;
  border-right: 1px solid #c4c4c4;
`;
const ResourceGroup = styled.div`
  display: flex;
  flex-direction: column;
  margin-right: -1px;
`;
const ResourceTab = styled.button`
  display: flex;
  align-items: center;
  justify-content: center;
  height: ${(p) => p.$h}px;
  background: ${(p) => (p.$active ? '#fff' : 'none')};
  color: #333;
`;
const Navigator = styled.section`
  display: flex;
  flex-direction: column;
  width: 218px;
  padding: 0 6px 4px 4px;
  font-size: 11px;
`;
const NavTitle = styled.header`
  display: flex;
  align-items: center;
  justify-content: space-between;
  height: 22px;
  padding: 2px 3px 0;
`;
const SquareButton = styled.button`
  width: 11px;
  height: 10px;
  border: 1px solid #333;
`;
const TreeWrap = styled.div`
  flex: 1 1 0;
  overflow: hidden;
  border: solid ${rule};
  border-width: 0 1px;
`;
const Tree = styled.table`
  width: 100%;
  table-layout: fixed;
  border-collapse: collapse;
  line-height: 16px;
  & th, & td {
    height: 17px;
    padding: 0;
    border-bottom: 1px solid #ececec;
    text-align: left;
    font-weight: 400;
  }
  & th {
    padding-left: 4px;
    background: #efefef;
  }
  & th + th, & td + td {
    width: 66px;
    padding-left: 4px;
    border-left: 1px solid #ececec;
  }
  & tbody tr:nth-child(even) {
    background: #fafafa;
  }
`;
const SortMark = styled.svg`
  display: inline-block;
  margin-left: 12px;
`;
const NodeRow = styled.div`
  display: flex;
  align-items: center;
  gap: 1px;
  height: 16px;
  padding-left: ${(p) => p.$indent || 0}px;
  font-weight: ${(p) => (p.$indent ? 700 : 400)};
  white-space: nowrap;
`;
const HScroll = styled.div`
  display: flex;
  align-items: center;
  height: 14px;
  margin-bottom: 1px;
  padding: 0 4px;
  background: #f0f0f0;
`;
const HThumb = styled.i`
  flex: 130;
  height: 13px;
  margin-left: 2px;
  background: #cdcdcd;
`;
const HRest = styled.i`
  flex: 48;
`;
const Splitter = styled.i`
  height: 4px;
  background: #d2d2d2;
  border: solid #bbb;
  border-width: 1px 0;
`;
const NavSection = styled.button`
  display: flex;
  align-items: center;
  justify-content: space-between;
  height: 20px;
  padding: 2px 4px 0;
  border-bottom: 1px solid #c8c8c8;
  font-size: 13px;
  color: ${link};
`;

/* ---------- dialog ---------- */

const Dialog = styled.section`
  display: flex;
  flex-direction: column;
  width: 281px;
  border: solid #b4b4b4;
  border-width: 0 1px 1px 2px;
  border-right-color: #e4e4e4;
  background: #f0f0f0;
  font-size: 11px;
`;
const DialogHead = styled.header`
  display: flex;
  align-items: center;
  gap: 8px;
  height: 19px;
  padding: 0 6px;
  background: ${teal};
  color: #fff;
`;
const DialogTitle = styled.h2`
  flex: 1;
  margin: 0;
  font-size: 11px;
  font-weight: 400;
`;
const DialogBody = styled.div`
  display: flex;
  gap: 1px;
  padding: 3px 4px 0 3px;
`;
const Cards = styled.div`
  flex: 1;
  display: flex;
  flex-direction: column;
  gap: 3px;
`;
const Card = styled.section`
  display: flex;
  flex-direction: column;
  padding: 0 6px ${(p) => (p.$last ? 5 : 6)}px;
  background: #fff;
  box-shadow: 0 1px 1px #c4c4c4;
`;
const CardHead = styled.button`
  display: flex;
  align-items: center;
  justify-content: space-between;
  height: 20px;
  margin: 0 -2px ${(p) => (p.$last ? 0 : 3)}px -1px;
  font-size: 13px;
  color: ${link};
`;
const Row = styled.div`
  position: relative;
  display: flex;
  align-items: center;
  justify-content: space-between;
  gap: 2px;
  height: ${(p) => p.$h || 20}px;
  & + & {
    margin-top: 2px;
  }
`;
const Pick = styled.span`
  flex: 1;
  display: flex;
  align-items: center;
  gap: 3px;
  height: 100%;
  padding-left: 1px;
  background: ${(p) => (p.$on ? '#ffe07a' : 'none')};
`;
const SquareTool = styled.button`
  display: flex;
  align-items: center;
  justify-content: center;
  width: ${(p) => p.$s || 23}px;
  height: ${(p) => p.$s || 22}px;
  border: 1px solid ${(p) => (p.$on ? '#ffe07a' : '#b4b4b4')};
  background: ${(p) => (p.$on ? '#ffe07a' : '#fff')};
  opacity: ${(p) => (p.disabled ? 0.7 : 1)};
`;
const Muted = styled.span`
  color: #a3a3a3;
`;
const CheckLabel = styled.label`
  display: flex;
  align-items: center;
  gap: 3px;
`;
const Check = styled.input`
  width: 13px;
  height: 13px;
  appearance: none;
  border: 1px solid #444;
  background: #fff;
`;
const Highlight = styled.i`
  position: absolute;
  inset: -5px -5px -5px -10px;
  border: 2px solid #f5271b;
  border-radius: 3px;
  pointer-events: none;
`;
const VScroll = styled.div`
  display: flex;
  flex-direction: column;
  align-items: center;
  gap: 3px;
  width: 13px;
  padding: 2px 0 3px;
`;
const VThumb = styled.i`
  flex: 310;
  width: 100%;
  background: #a6a6a6;
`;
const VRest = styled.i`
  flex: 20;
`;
const Collapse = styled.button`
  display: flex;
  align-items: center;
  justify-content: center;
  height: 10px;
  margin: 0 4px 0 3px;
  border-bottom: 1px solid #cfcfcf;
`;
const DialogFoot = styled.footer`
  display: flex;
  justify-content: flex-end;
  gap: 3px;
  padding: 5px 10px 0;
`;
const PushButton = styled.button`
  width: 42px;
  height: 20px;
  border: 1px solid ${(p) => (p.$primary ? '#72b3cb' : '#bcbcbc')};
  background: ${(p) => (p.$primary ? '#72b3cb' : '#dedede')};
  color: ${(p) => (p.$primary ? '#fff' : ink)};
  white-space: nowrap;
`;

/* ---------- viewport ---------- */

const Viewport = styled.section`
  flex: 1;
  position: relative;
  overflow: hidden;
`;
const Datum = styled.svg`
  position: absolute;
  left: 136px;
  top: 106px;
`;
const Watermark = styled.svg`
  position: absolute;
  right: 98px;
  bottom: 0;
`;
const StatusBar = styled.footer`
  height: 16px;
  padding-left: 3px;
  border-top: 1px solid #c4c4c4;
  font-weight: 600;
  line-height: 14px;
`;
const BottomEdge = styled.i`
  height: 6px;
  background: ${teal};
`;
const Banner = styled.div`
  position: fixed;
  right: 0;
  bottom: 0;
  display: flex;
  flex-direction: column;
  align-items: center;
  width: 207px;
  height: 79px;
  padding: 7px 0 0 6px;
  background:
    radial-gradient(ellipse 100px 40px at 50% 0, rgba(150, 235, 240, 0.8), transparent),
    linear-gradient(#8cbcda, #8ab4e2 50%, #7f9fd8 70%, #5b7fc0 85%, #3c5894);
`;
const BannerTitle = styled.strong`
  font-family: 'Noto Sans CJK SC', sans-serif;
  font-size: 32px;
  font-weight: 900;
  line-height: 36px;
  background: linear-gradient(90deg, #12a3cc, #38a536 50%, #38a536 70%, #12a3cc);
  background-clip: text;
  color: transparent;
`;
const BannerUrl = styled.strong`
  font-size: 18px;
  line-height: 32px;
  color: #2aa574;
`;

/* ---------- data ---------- */

const tabs = ['主页', '装配', '曲线', '曲面', '分析', '视图', '渲染', '工具', '应用模块', '内部'];

const groups = [
  {
    name: '直接草图',
    cols: 'repeat(2, 1fr)',
    tail: 8,
    tools: ['sketchEdit', 'sketchNew', 'curve', 'pad'],
    big: ['curve', '草图曲线'],
  },
  {
    name: '特征',
    cols: '41fr 41fr repeat(6, 31fr)',
    tools: [
      'plane', 'revolve', 'hole', 'edgeBlend', 'shell', 'draft', 'pattern', 'taper',
      'extrude', 'unite', 'offset', 'chamfer', 'thread', 'trim', 'split', 'thicken',
    ],
    big: ['boss', '更多'],
  },
  {
    name: '同步建模',
    cols: 'repeat(3, 1fr)',
    tools: ['moveFace', 'pullFace', 'offsetRegion', 'replaceFace', 'deleteFace', 'resizeBlend'],
    big: ['sync', '更多'],
  },
  {
    name: '曲面',
    cols: 'repeat(5, 1fr)',
    tools: ['fourPoint', 'sheet', 'studio', 'sweep', 'through', 'mesh1', 'mesh2', 'extract', 'xform', 'toolWin'],
    big: ['greenMesh', '更多'],
  },
];
const withCaret = ['plane', 'unite'];

const singles = [
  { icon: 'editFeature', label: '编辑特征', size: 32 },
  { icon: 'assembly', label: '装配', size: 34 },
  { icon: 'ruler', label: '测量', size: 30 },
  { icon: 'analyse', label: '分析', size: 16, framed: true },
];

const snapTools = [
  'grayChain', 'grayBack', 'funnelBox', null, 'redTarget', 'grayTree', 'marquee', null, 'shade', 'blueCube',
  'arrows', 'line', 'midLine', 'spline', 'arcCross', 'circleDot', 'circleQuad', 'plus',
];
const viewTools = ['zoomWin', 'pan', 'rotate', 'fit', null, 'section', null];

const nodes = [
  { icons: ['clock'], text: '历史记录模式' },
  { icons: ['views'], text: '模型视图', sign: '+' },
  { icons: ['tick', 'camera'], text: '摄像机', sign: '+' },
  { icons: ['folder'], text: '模型历史记录', sign: '-' },
  { icons: ['boxTick', 'csys'], text: '基准坐标系 (0)', indent: 13, fresh: true },
];
const blankRows = Array.from({ length: 13 }, (_, i) => i);

/* ---------- parts ---------- */

const Joint = ({ sign, first, last }) => (
  <svg width="13" height="17" viewBox="0 0 13 17" aria-hidden="true">
    <path
      d={`M7.500 ${first ? 8 : 0}V${last ? 8 : 17}M7.500 8.500H13`}
      stroke="#bbb"
      strokeDasharray="1 1"
      fill="none"
    />
    {sign && (
      <g>
        <rect x="3" y="4" width="9" height="9" fill="#f4f4f4" />
        <path d={sign === '+' ? 'M5 8.500H10M7.500 6V11' : 'M5 8.500H10'} stroke="#333" />
      </g>
    )}
  </svg>
);

const IconRun = ({ items, size }) =>
  items.map((name, i) =>
    name ? (
      <IconButton key={name} $w={25} aria-label={name}>
        <Glyph name={name} size={size} />
      </IconButton>
    ) : (
      <IconButton key={i} $w={9} aria-label="更多选项">
        <Caret />
      </IconButton>
    )
  );

const Big = ({ icon, label, size = 16, plain, wide }) => (
  <BigTool $wide={wide}>
    <BigFrame $plain={plain}>
      <Glyph name={icon} size={size} />
    </BigFrame>
    <BigLabel>{label}</BigLabel>
    <Caret />
  </BigTool>
);

const Section = ({ title, last, children }) => (
  <Card $last={last}>
    <CardHead $last={last}>
      {title}
      <Glyph name="chevUp" size={12} />
    </CardHead>
    {children}
  </Card>
);

const TopBar = () => (
  <TitleBar>
    <Logo>NX</Logo>
    <Divider />
    <IconButton aria-label="新建"><Glyph name="newFile" size={16} /></IconButton>
    <IconButton aria-label="打开"><Glyph name="open" size={16} /></IconButton>
    <Divider />
    <IconButton aria-label="保存"><Glyph name="save" size={14} /></IconButton>
    <Divider />
    <IconButton aria-label="撤销"><Glyph name="undo" size={14} /></IconButton>
    <IconButton $w={8} aria-label="撤销列表"><Caret /></IconButton>
    <IconButton aria-label="重做"><Glyph name="redo" size={14} /></IconButton>
    <Divider />
    <IconButton aria-label="剪切"><Glyph name="cut" size={16} /></IconButton>
    <IconButton aria-label="复制"><Glyph name="copy" size={16} /></IconButton>
    <IconButton aria-label="粘贴"><Glyph name="paste" size={16} /></IconButton>
    <Divider />
    <IconButton aria-label="命令"><Glyph name="star" size={17} /></IconButton>
    <IconButton $w={8} aria-label="命令列表"><Caret /></IconButton>
    <Divider $gap={4} />
    <IconButton $w={22} aria-label="重复命令"><Glyph name="pointer" size={17} /></IconButton>
    <Divider />
    <TextButton><Glyph name="switchWin" size={15} />切换窗口</TextButton>
    <TextButton><Glyph name="window" size={17} />窗口 <Caret /></TextButton>
    <TextButton><span>导出(<u>E</u>)</span><Caret /></TextButton>
    <IconButton $w={8} aria-label="自定义">
      <svg width="7" height="7" viewBox="0 0 7 7"><path d="M0 0H7V1H0zM0 3H7L3.500 7z" fill="#222" /></svg>
    </IconButton>
    <WindowTitle>NX 11.0.0.33 - 建模 - [_model1.prt （修改的） ]</WindowTitle>
    <Brand>SIEMENS</Brand>
    <IconButton $w={21} aria-label="最小化"><Glyph name="minimise" size={10} /></IconButton>
    <IconButton $w={21} aria-label="最大化"><Glyph name="maximise" size={9} /></IconButton>
    <IconButton $w={22} aria-label="关闭"><Glyph name="close" size={11} /></IconButton>
  </TitleBar>
);

const Tabs = () => (
  <TabBar>
    <FileTab>文件(F)</FileTab>
    {tabs.map((name, i) => (
      <Tab key={name} $active={i === 0}>{name}</Tab>
    ))}
    <SearchBox>
      <SearchInput placeholder="查找命令" aria-label="查找命令" />
      <Glyph name="search" size={12} />
    </SearchBox>
    <IconButton $w={22} aria-label="全屏"><Glyph name="fullscreen" size={12} /></IconButton>
    <IconButton $w={21} aria-label="收起功能区"><Glyph name="doubleUp" size={10} /></IconButton>
    <IconButton $w={20} aria-label="帮助"><Glyph name="help" size={10} /></IconButton>
    <IconButton $w={15} aria-label="最小化文档"><Glyph name="minimise" size={10} /></IconButton>
    <IconButton $w={21} aria-label="还原文档"><Glyph name="restore" size={10} /></IconButton>
    <IconButton $w={22} aria-label="关闭文档"><Glyph name="closeBold" size={9} /></IconButton>
  </TabBar>
);

const RibbonBar = () => (
  <Ribbon>
    {groups.map((g) => (
      <Group key={g.name}>
        <GroupBody $tail={g.tail}>
          <IconGrid $cols={g.cols}>
            {g.tools.map((t) => (
              <Tool key={t} aria-label={t}>
                <Glyph name={t} />
                {withCaret.includes(t) && <Caret />}
              </Tool>
            ))}
          </IconGrid>
          <Big icon={g.big[0]} label={g.big[1]} />
        </GroupBody>
        <GroupFoot>
          <GroupName>{g.name}</GroupName>
          <IconButton $w={18} $h={15} aria-label={`${g.name}选项`}><Caret /></IconButton>
        </GroupFoot>
      </Group>
    ))}
    {singles.map((s) => (
      <Group key={s.label}>
        <Big wide icon={s.icon} label={s.label} size={s.size} plain={!s.framed} />
      </Group>
    ))}
    <LastCell>
      <IconButton $w={19} $h={15} aria-label="功能区选项"><Caret /></IconButton>
    </LastCell>
  </Ribbon>
);

const Selection = () => (
  <SelectionBar>
    <MenuButton>
      <Glyph name="menu" size={17} />
      <span>菜单(<u>M</u>)</span>
      <Caret />
    </MenuButton>
    <Divider $h={32} $gap={4} />
    <FilterGroup>
      <Combo $w="117px">
        <Select aria-label="选择过滤器"><option>无选择过滤器</option></Select>
        <Caret />
      </Combo>
      <Combo $w="123px">
        <Select aria-label="选择范围"><option>仅在工作部件内</option></Select>
        <Caret />
      </Combo>
    </FilterGroup>
    <IconRun items={snapTools} size={16} />
    <Stack>
      <IconButton $w={20} $h={17} aria-label="直线"><Glyph name="line" size={11} /></IconButton>
      <IconButton $w={20} $h={17} aria-label="面"><Glyph name="grayFace" size={12} /></IconButton>
    </Stack>
    <Divider $h={32} $gap={5} />
    <IconRun items={viewTools} size={17} />
    <Stack>
      <IconButton $w={25} $h={17} aria-label="渲染样式"><Glyph name="smallCube" size={12} /></IconButton>
      <IconButton $w={25} $h={17} aria-label="播放"><Glyph name="playPair" size={12} /></IconButton>
    </Stack>
    <Stack>
      <IconButton $w={9} $h={17} aria-label="样式列表"><Caret /></IconButton>
      <IconButton $w={9} $h={17} aria-label="播放列表"><Caret /></IconButton>
    </Stack>
    <Divider $h={32} $gap={4} />
    <Spring />
    <IconButton $w={15} $h={10} aria-label="工具条选项"><Caret /></IconButton>
  </SelectionBar>
);

const Resources = () => (
  <ResourceBar>
    <ResourceGroup>
      <ResourceTab $h={20} aria-label="设置"><Glyph name="gear" size={11} /></ResourceTab>
    </ResourceGroup>
    <ResourceGroup />
    <ResourceGroup>
      {['partsTree', 'constraint', 'history', 'books'].map((n) => (
        <ResourceTab key={n} $h={29} $active={n === 'history'} aria-label={n}><Glyph name={n} size={17} /></ResourceTab>
      ))}
    </ResourceGroup>
    <ResourceGroup>
      {['info', 'globe', 'clock'].map((n) => (
        <ResourceTab key={n} $h={37} aria-label={n}><Glyph name={n} size={17} /></ResourceTab>
      ))}
      {['rainbowPen', 'bluePen', 'hammer'].map((n) => (
        <ResourceTab key={n} $h={29} aria-label={n}><Glyph name={n} size={16} /></ResourceTab>
      ))}
    </ResourceGroup>
  </ResourceBar>
);

const PartNavigator = () => (
  <Navigator>
    <NavTitle>
      部件导航器
      <SquareButton aria-label="最大化面板" />
    </NavTitle>
    <TreeWrap>
      <Tree>
        <thead>
          <tr>
            <th>
              名称
              <SortMark width="8" height="5" viewBox="0 0 8 5"><path d="M0 5H8L4 0z" fill="#111" /></SortMark>
            </th>
            <th>最新</th>
          </tr>
        </thead>
        <tbody>
          {nodes.map((n, i) => (
            <tr key={n.text}>
              <td>
                <NodeRow $indent={n.indent}>
                  <Joint sign={n.sign} first={i === 0} last={i > 2} />
                  {n.icons.map((name) => <Glyph key={name} name={name} size={12} />)}
                  {n.text}
                </NodeRow>
              </td>
              <td>{n.fresh && <Glyph name="tick" size={10} />}</td>
            </tr>
          ))}
          {blankRows.map((i) => (
            <tr key={i}><td /><td /></tr>
          ))}
        </tbody>
      </Tree>
    </TreeWrap>
    <HScroll>
      <Glyph name="thinLeft" size={8} />
      <HThumb />
      <HRest />
      <Glyph name="thinRight" size={8} />
    </HScroll>
    <Splitter />
    {['相依性', '细节', '预览'].map((s) => (
      <NavSection key={s}>{s}<Glyph name="chevDown" size={11} /></NavSection>
    ))}
  </Navigator>
);

const PlaneDialog = () => (
  <Dialog>
    <DialogHead>
      <Glyph name="gear" size={10} />
      <DialogTitle>基准平面</DialogTitle>
      <IconButton $w={10} $h={16} aria-label="重置"><Glyph name="reset" size={10} /></IconButton>
      <IconButton $w={9} $h={16} aria-label="关闭对话框"><Glyph name="closeBold" size={9} /></IconButton>
    </DialogHead>
    <DialogBody>
      <Cards>
        <Section title="类型">
          <Combo $h={20}>
            <Glyph name="angle" size={11} />
            <Select $pad={17} aria-label="类型"><option>成一角度</option></Select>
            <Caret />
          </Combo>
        </Section>
        <Section title="平面参考">
          <Row $h={22}>
            <Pick $on><Glyph name="tick" size={10} />选择平面对象 (1)</Pick>
            <SquareTool $on aria-label="选择平面对象"><Glyph name="target" size={14} /></SquareTool>
          </Row>
        </Section>
        <Section title="通过轴">
          <Row $h={22}>
            <Pick><Glyph name="tick" size={10} />选择线性对象 (1)</Pick>
            <SquareTool aria-label="选择线性对象"><Glyph name="target" size={14} /></SquareTool>
          </Row>
        </Section>
        <Section title="角度">
          <Row>
            <label htmlFor="angle-option">角度选项</label>
            <Combo $w="107px" $h={20}>
              <Select id="angle-option" $pad={3}><option>平行</option></Select>
              <Caret />
            </Combo>
            <Highlight />
          </Row>
        </Section>
        <Section title="平面方位">
          <Row $h={22}>
            <Muted>备选解</Muted>
            <SquareTool disabled aria-label="备选解"><Glyph name="alternate" size={19} /></SquareTool>
          </Row>
          <Row $h={17}>
            反向
            <SquareTool $s={17} aria-label="反向"><Glyph name="reverse" size={12} /></SquareTool>
          </Row>
        </Section>
        <Section title="偏置">
          <Row $h={17}>
            <CheckLabel><Check type="checkbox" />偏置</CheckLabel>
          </Row>
        </Section>
        <Section title="设置" last />
      </Cards>
      <VScroll>
        <Glyph name="thinUp" size={9} />
        <VThumb />
        <VRest />
        <Glyph name="thinDown" size={9} />
      </VScroll>
    </DialogBody>
    <Collapse aria-label="收起对话框">
      <svg width="8" height="4" viewBox="0 0 8 4"><path d="M0 4H8L4 0z" fill="#111" /></svg>
    </Collapse>
    <DialogFoot>
      <PushButton $primary>&lt; 确定 &gt;</PushButton>
      <PushButton>应用</PushButton>
      <PushButton>取消</PushButton>
    </DialogFoot>
  </Dialog>
);

const handles = [[16, 28], [64, 42], [112, 56], [25, 63], [121, 92], [34, 99], [83, 113], [130, 127]];

const Scene = () => (
  <Viewport>
    <Datum width="180" height="160" viewBox="0 0 180 160">
      <defs>
        <radialGradient id="ball" cx="0.35" cy="0.3" r="0.8">
          <stop offset="0" stopColor="#f0e0a0" />
          <stop offset="0.5" stopColor="#b39a4c" />
          <stop offset="1" stopColor="#6f5c22" />
        </radialGradient>
      </defs>
      <path d="M16 28L112 56L130 127L34 99z" fill="#caebea" stroke="#2b9f9b" strokeWidth="1.500" />
      <path d="M65 48L106 59L114 89" fill="none" stroke="#cf9450" strokeWidth="2" />
      <g fill="none" stroke="#5b66ee" strokeWidth="1">
        <path d="M65 47L44 81L52 112L93 124L114 90" strokeDasharray="5 1" />
        <path d="M73 78L60 25M73 78L146 98M73 78L31 144" />
      </g>
      <path d="M73 78L56 106L50 118L47 121L49 110z" fill="#cdb661" stroke="#a68d3c" strokeWidth="0.8" />
      <g fill="#1414a8">
        <path d="M58 18L62 26L57 27z" />
        <path d="M154 101L144 102L145 97z" />
        <path d="M31 144L33 136L38 138z" />
      </g>
      {handles.map(([x, y]) => (
        <circle key={`${x}-${y}`} cx={x} cy={y} r="3" fill="url(#ball)" />
      ))}
      <g fontSize="9" fill="#3b3be0">
        <text x="54" y="19">Z</text>
        <text x="156" y="107">Y</text>
        <text x="26" y="152">X</text>
      </g>
    </Datum>
    <Watermark width="132" height="92" viewBox="0 0 132 92" fill="#fff" stroke="#d8d8d8" strokeWidth="2">
      <ellipse cx="80" cy="17" rx="7" ry="10" />
      <ellipse cx="96" cy="18" rx="7" ry="9" />
      <ellipse cx="67" cy="29" rx="7" ry="9" />
      <ellipse cx="107" cy="32" rx="7" ry="9" />
      <path d="M72 52Q87 18 104 52z" />
      <g fontFamily="Liberation Sans" strokeWidth="1.500">
        <text x="0" y="62" fontSize="36" fontWeight="700">B</text>
        <text x="4" y="86" fontSize="17" strokeWidth="1">jin</text>
      </g>
    </Watermark>
  </Viewport>
);

const App = () => (
  <Frame>
    <GlobalStyle />
    <Window>
      <TopBar />
      <Tabs />
      <RibbonBar />
      <Selection />
      <Workspace>
        <Resources />
        <PartNavigator />
        <PlaneDialog />
        <Scene />
      </Workspace>
      <StatusBar>选择平面对象</StatusBar>
    </Window>
    <BottomEdge />
    <Banner>
      <BannerTitle>我爱学教程</BannerTitle>
      <BannerUrl>www.52xjc.com</BannerUrl>
    </Banner>
    <Gradients />
  </Frame>
);

export default App;
